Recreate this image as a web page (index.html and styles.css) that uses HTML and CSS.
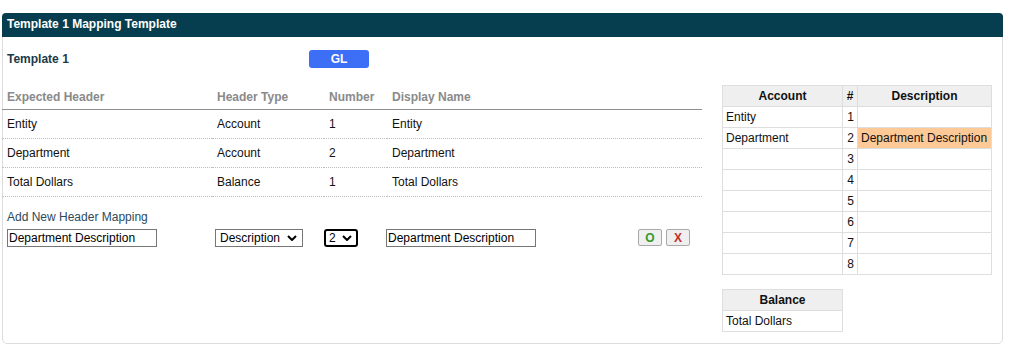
FILE: index.html
```html
<!DOCTYPE html>
<html lang="en">
<head>
    <meta charset="UTF-8">
    <title>Template 1 Mapping Template</title>
    <link rel="stylesheet" href="styles.css">
</head>
<body>
    <div class="panel">
        <div class="panel_head">Template 1 Mapping Template</div>
        <div class="panel_body">
            <div class="left_col">
                <div class="top_row">
                    <span class="tpl_name">Template 1</span>
                    <button class="btn_gl">GL</button>
                </div>

                <table class="map_table">
                    <thead>
                        <tr>
                            <th class="c1">Expected Header</th>
                            <th class="c2">Header Type</th>
                            <th class="c3">Number</th>
                            <th>Display Name</th>
                        </tr>
                    </thead>
                    <tbody>
                        <tr><td>Entity</td><td>Account</td><td>1</td><td>Entity</td></tr>
                        <tr><td>Department</td><td>Account</td><td>2</td><td>Department</td></tr>
                        <tr><td>Total Dollars</td><td>Balance</td><td>1</td><td>Total Dollars</td></tr>
                    </tbody>
                </table>

                <div class="add_title">Add New Header Mapping</div>
                <div class="add_row">
                    <input class="txt txt_a" type="text" value="Department Description">
                    <select class="sel sel_type"><option>Description</option></select>
                    <select class="sel sel_num"><option>2</option></select>
                    <input class="txt txt_b" type="text" value="Department Description">
                    <span class="btns">
                        <button class="btn_sm btn_ok">O</button>
                        <button class="btn_sm btn_x">X</button>
                    </span>
                </div>
            </div>

            <div class="right_col">
                <table class="grid_table">
                    <tr><th class="g1">Account</th><th class="g2">#</th><th class="g3">Description</th></tr>
                    <tr><td>Entity</td><td class="num">1</td><td></td></tr>
                    <tr><td>Department</td><td class="num">2</td><td class="hl">Department Description</td></tr>
                    <tr><td></td><td class="num">3</td><td></td></tr>
                    <tr><td></td><td class="num">4</td><td></td></tr>
                    <tr><td></td><td class="num">5</td><td></td></tr>
                    <tr><td></td><td class="num">6</td><td></td></tr>
                    <tr><td></td><td class="num">7</td><td></td></tr>
                    <tr><td></td><td class="num">8</td><td></td></tr>
                </table>

                <table class="grid_table bal_table">
                    <tr><th class="g1">Balance</th></tr>
                    <tr><td>Total Dollars</td></tr>
                </table>
            </div>
        </div>
    </div>
</body>
</html>
```

FILE: styles.css
```css
* {
    margin: 0;
    padding: 0;
    box-sizing: border-box;
}

body {
    background-color: #fff;
    color: #111;
    font-family: "Liberation Sans", Arial, sans-serif;
    font-size: 12px;
    padding: 13px 13px 0 2px;
}

.panel {
    width: 1001px;
    height: 331px;
    border: 1px solid #dcdcdc;
    border-radius: 5px;
}

.panel_head {
    background-color: #073e4f;
    color: #fff;
    font-weight: bold;
    height: 24px;
    line-height: 23px;
    padding-left: 5px;
    border-radius: 4px 4px 0 0;
    margin: -1px -1px 0 -1px;
}

.panel_body {
    display: flex;
    gap: 20px;
}

.left_col {
    width: 700px;
    margin-left: -1px;
}

.top_row {
    display: flex;
    align-items: center;
    height: 18px;
    margin-top: 13px;
    padding-left: 5px;
}

.tpl_name {
    font-weight: bold;
    color: #1b3a48;
    width: 302px;
}

.btn_gl {
    width: 60px;
    height: 18px;
    background-color: #3c6ef6;
    color: #fff;
    font-family: "Liberation Sans", Arial, sans-serif;
    font-weight: bold;
    font-size: 12px;
    border: none;
    border-radius: 3px;
}

.map_table {
    width: 700px;
    border-collapse: collapse;
    margin-top: 17px;
}

.map_table th {
    text-align: left;
    color: #8a8a8a;
    font-weight: bold;
    height: 24px;
    padding-left: 5px;
    border-bottom: 1px solid #8f8f8f;
}

.map_table td {
    height: 29px;
    padding-left: 5px;
    border-bottom: 1px dotted #bdbdbd;
}

.c1 { width: 210px; }
.c2 { width: 112px; }
.c3 { width: 63px; }

.add_title {
    color: #2b4a5b;
    margin-top: 13px;
    padding-left: 5px;
}

.add_row {
    display: flex;
    align-items: center;
    margin-top: 5px;
    padding-left: 5px;
}

.txt {
    height: 18px;
    width: 150px;
    border: 1px solid #767676;
    font-family: "Liberation Sans", Arial, sans-serif;
    font-size: 12px;
    padding-left: 1px;
    color: #000;
}

.sel {
    -webkit-appearance: none;
    appearance: none;
    height: 18px;
    border: 1px solid #767676;
    border-radius: 0;
    font-family: "Liberation Sans", Arial, sans-serif;
    font-size: 12px;
    color: #000;
    padding-left: 4px;
    background-color: #fff;
    background-image: url("data:image/svg+xml;utf8,<svg xmlns='http://www.w3.org/2000/svg' width='10' height='6' viewBox='0 0 10 6'><path d='M1 1l4 4 4-4' fill='none' stroke='black' stroke-width='2'/></svg>");
    background-repeat: no-repeat;
    background-position: right 5px center;
}

.sel_type {
    width: 88px;
    margin-left: 58px;
}

.sel_num {
    width: 34px;
    margin-left: 21px;
    padding-left: 3px;
    border: 2px solid #000;
    border-radius: 3px;
    background-position: right 4px center;
}

.txt_b {
    margin-left: 28px;
}

.btns {
    display: flex;
    gap: 4px;
    margin-left: 102px;
}

.btn_sm {
    width: 24px;
    height: 17px;
    background-color: #efefef;
    border: 1px solid #a9a9a9;
    border-radius: 2px;
    font-family: "Liberation Sans", Arial, sans-serif;
    font-weight: bold;
    font-size: 12px;
}

.btn_ok { color: #2e9a2e; }
.btn_x { color: #c0302a; }

.right_col {
    padding-top: 48px;
}

.grid_table {
    border-collapse: collapse;
    width: 270px;
}

.grid_table th {
    background-color: #efefef;
    font-weight: bold;
    height: 21px;
    border: 1px solid #dedede;
    text-align: center;
}

.grid_table td {
    height: 21px;
    border: 1px solid #dedede;
    padding-left: 3px;
}

.g1 { width: 120px; }
.g2 { width: 15px; }

.grid_table td.num {
    text-align: right;
    padding-left: 0;
    padding-right: 3px;
}

.grid_table td.hl {
    background-color: #fdc996;
}

.bal_table {
    width: 121px;
    margin-top: 14px;
}
```
